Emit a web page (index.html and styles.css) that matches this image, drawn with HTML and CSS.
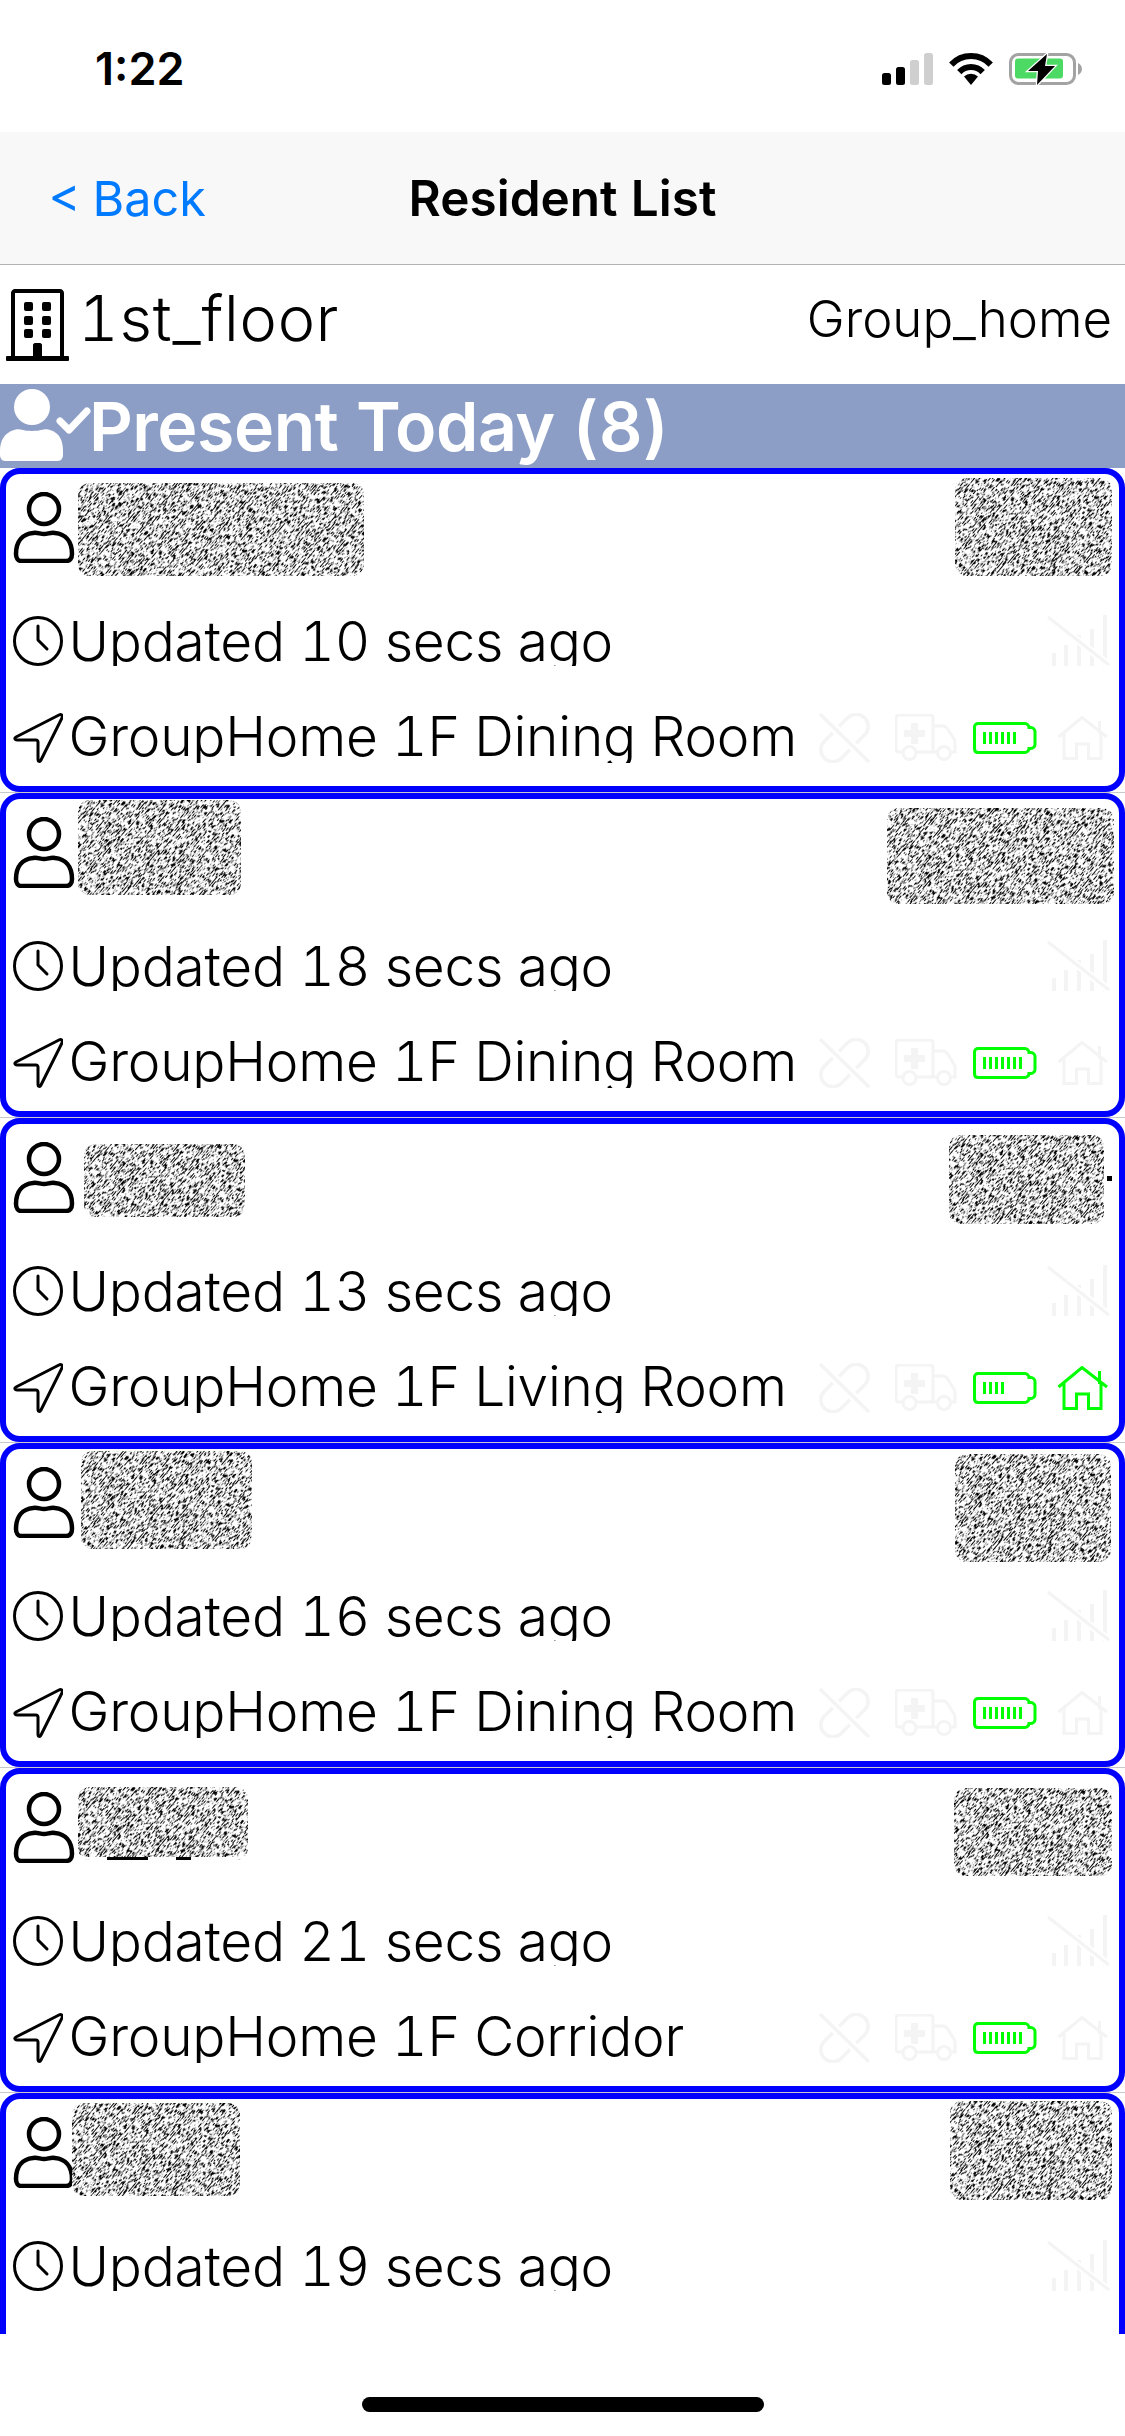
FILE: index.html
```html
<!DOCTYPE html>
<html>
<head>
  <meta charset="utf-8">
  <title>Resident List</title>
  <link rel="stylesheet" href="styles.css">
</head>
<body>

<!-- shared icons and the noise used on the hidden names -->
<svg class="defs" aria-hidden="true">
  <defs>
    <filter id="noise" x="0" y="0" width="100%" height="100%" color-interpolation-filters="sRGB">
      <feTurbulence type="fractalNoise" baseFrequency="0.2 0.95" numOctaves="2" seed="4"/>
      <feColorMatrix values="-7 0 0 0 4.5  -7 0 0 0 4.5  -7 0 0 0 4.5  0 0 0 0 1"/>
      <feGaussianBlur stdDeviation="0.4"/>
    </filter>
    <symbol id="i-person" viewBox="0 0 62 71">
      <circle cx="31" cy="17" r="15" fill="none" stroke="currentColor" stroke-width="4.500"/>
      <path d="M3 62c0-13 7-20 17-21 4-1 7 1 11 1s7-2 11-1c10 1 17 8 17 21 0 4-2 7-6 7H8c-3 0-5-3-5-7z" fill="none" stroke="currentColor" stroke-width="4.500"/>
    </symbol>
    <symbol id="i-clock" viewBox="0 0 50 50">
      <circle cx="25" cy="25" r="23.500" fill="none" stroke="currentColor" stroke-width="3"/>
      <path d="M25 10v14l9 9" fill="none" stroke="currentColor" stroke-width="3" stroke-linecap="round" stroke-linejoin="round"/>
    </symbol>
    <symbol id="i-arrow" viewBox="0 0 50 50">
      <path d="M46 2 3 24c-2 1-1 3 1 3h19c1 0 2 1 2 2v17c0 3 2 3 3 1L49 5c1-3-1-4-3-3z" fill="none" stroke="currentColor" stroke-width="3" stroke-linejoin="round"/>
    </symbol>
    <symbol id="i-signal" viewBox="0 0 63 51">
      <path d="M5 38h4v13H5zM17 30h4v21h-4zM30 20h4v31h-4zM43 14h4v37h-4zM56 0h4v51h-4z" fill="currentColor"/>
      <path d="M1 2 62 50" stroke="#fff" stroke-width="7"/>
      <path d="M1 2 62 50" stroke="currentColor" stroke-width="3"/>
    </symbol>
    <symbol id="i-pill" viewBox="0 0 51 50">
      <rect x="-3" y="13" width="57" height="24" rx="12" transform="rotate(-45 25.5 25)" fill="none" stroke="currentColor" stroke-width="3.500"/>
      <path d="M1 1 50 49" stroke="#fff" stroke-width="9"/>
      <path d="M1 1 50 49" stroke="currentColor" stroke-width="3.500"/>
    </symbol>
    <symbol id="i-amb" viewBox="0 0 63 47">
      <path d="M7 38H4c-2 0-3-1-3-3V4c0-2 1-3 3-3h31c2 0 3 1 3 3v34H22M38 12h10c2 0 3 1 4 2l7 11c1 1 1 2 1 4v9h-3M38 38h4" fill="none" stroke="currentColor" stroke-width="3"/>
      <circle cx="14.500" cy="39" r="6.500" fill="none" stroke="currentColor" stroke-width="3"/>
      <circle cx="49" cy="39" r="6.500" fill="none" stroke="currentColor" stroke-width="3"/>
      <path d="M16 9h7v7h7v7h-7v7h-7v-7H9v-7h7z" fill="currentColor"/>
    </symbol>
    <symbol id="i-home" viewBox="0 0 51 44">
      <path d="M1.500 21 25 1.500 50 21M7 17v25.500h12.500V28h12v14.500H44V17M42.500 5v13" fill="none" stroke="currentColor" stroke-width="3"/>
    </symbol>
    <symbol id="i-batt" viewBox="0 0 64 32">
      <path d="M5 1.500h47c2 0 4 2 4 4h2c2 0 4 2 4 4v13c0 2-2 4-4 4h-2c0 2-2 4-4 4H5c-2 0-3.500-1-3.500-4V5C1.500 3 3 1.500 5 1.500z" fill="none" stroke="currentColor" stroke-width="3"/>
    </symbol>
    <symbol id="i-batt4" viewBox="0 0 64 32">
      <use href="#i-batt" width="64" height="32"/>
      <path d="M10 10h3v12h-3zM16 10h3v12h-3zM22 10h3v12h-3zM28 10h3v12h-3z" fill="currentColor"/>
    </symbol>
    <symbol id="i-batt6" viewBox="0 0 64 32">
      <use href="#i-batt" width="64" height="32"/>
      <path d="M10 10h3v12h-3zM16 10h3v12h-3zM22 10h3v12h-3zM28 10h3v12h-3zM34 10h3v12h-3zM40 10h3v12h-3z" fill="currentColor"/>
    </symbol>
    <symbol id="i-batt7" viewBox="0 0 64 32">
      <use href="#i-batt" width="64" height="32"/>
      <path d="M10 10h3v12h-3zM16 10h3v12h-3zM22 10h3v12h-3zM28 10h3v12h-3zM34 10h3v12h-3zM40 10h3v12h-3zM46 10h3v12h-3z" fill="currentColor"/>
    </symbol>
  </defs>
</svg>

<div class="status">
  <span class="time">1:22</span>
  <div class="status-icons">
    <svg class="st-signal" viewBox="0 0 51 32">
      <rect x="0" y="20" width="9" height="12" rx="2.500" fill="#000"/>
      <rect x="14" y="14" width="9" height="18" rx="2.500" fill="#000"/>
      <rect x="28" y="7" width="9" height="25" rx="2.500" fill="#cfcfcf"/>
      <rect x="42" y="0" width="9" height="32" rx="2.500" fill="#cfcfcf"/>
    </svg>
    <svg class="st-wifi" viewBox="0 0 46 32">
      <path d="M3.300 11.600A27 27 0 0 1 42.700 11.600M11.300 19.100A16 16 0 0 1 34.700 19.100" fill="none" stroke="#000" stroke-width="6"/>
      <path d="M16 23.500A10 10 0 0 1 30 23.500L23 32z" fill="#000"/>
    </svg>
    <svg class="st-batt" viewBox="0 0 73 32">
      <rect x="1.500" y="1.500" width="64" height="29" rx="8" fill="none" stroke="#a3a3a3" stroke-width="3"/>
      <rect x="6" y="5.500" width="48" height="20" rx="3" fill="#4cd964"/>
      <path d="M69 10c2 1 4 3 4 6s-2 5-4 6z" fill="#a3a3a3"/>
      <path d="M38 1 19 18h10l-1 14 18-19H36z" fill="#000" stroke="#fff" stroke-width="2.500" paint-order="stroke"/>
    </svg>
  </div>
</div>

<div class="nav">
  <a class="back">&lt; Back</a>
  <span class="nav-title">Resident List</span>
  <span></span>
</div>

<div class="floor">
  <svg class="building" viewBox="0 0 63 72">
    <path d="M7 70V4c0-1 1-2 2-2h45c1 0 2 1 2 2v66" fill="none" stroke="#000" stroke-width="4"/>
    <rect x="0" y="67" width="63" height="5" rx="1" fill="#000"/>
    <rect x="18" y="13" width="9" height="9" rx="2"/><rect x="36" y="13" width="9" height="9" rx="2"/>
    <rect x="18" y="27" width="9" height="9" rx="2"/><rect x="36" y="27" width="9" height="9" rx="2"/>
    <rect x="18" y="40" width="9" height="9" rx="2"/><rect x="36" y="40" width="9" height="9" rx="2"/>
    <path d="M27 68V56c0-1 1-2 2-2h5c1 0 2 1 2 2v12z"/>
  </svg>
  <span class="floor-name">1st_floor</span>
  <span class="home-name">Group_home</span>
</div>

<div class="section">
  <svg class="section-icon" viewBox="0 0 92 72">
    <circle cx="32" cy="18" r="18" fill="#fff"/>
    <path d="M0 62c0-10 4-18 14-21 5-2 8 1 18 1s13-3 18-1c10 3 13 11 13 21v4c0 3-2 6-5 6H5c-3 0-5-3-5-6z" fill="#fff"/>
    <path d="M60 32 69 41 87 22" fill="none" stroke="#fff" stroke-width="7" stroke-linejoin="round" stroke-linecap="round"/>
  </svg>
  <span class="section-title">Present Today (8)</span>
</div>

<div class="list">

  <div class="item"><div class="card">
    <div class="row-top">
      <svg class="ic-person"><use href="#i-person"/></svg>
      <div class="redact n1"></div>
      <div class="redact s1"></div>
    </div>
    <div class="row">
      <svg class="ic"><use href="#i-clock"/></svg>
      <span class="txt">Updated 10 secs ago</span>
      <svg class="ic-signal"><use href="#i-signal"/></svg>
    </div>
    <div class="row">
      <svg class="ic"><use href="#i-arrow"/></svg>
      <span class="txt loc">GroupHome 1F Dining Room</span>
      <div class="flags">
        <svg class="ic-pill"><use href="#i-pill"/></svg>
        <svg class="ic-amb"><use href="#i-amb"/></svg>
        <svg class="ic-batt"><use href="#i-batt6"/></svg>
        <svg class="ic-home"><use href="#i-home"/></svg>
      </div>
    </div>
  </div></div>

  <div class="item"><div class="card">
    <div class="row-top">
      <svg class="ic-person"><use href="#i-person"/></svg>
      <div class="redact n2"></div>
      <div class="redact s2"></div>
    </div>
    <div class="row">
      <svg class="ic"><use href="#i-clock"/></svg>
      <span class="txt">Updated 18 secs ago</span>
      <svg class="ic-signal"><use href="#i-signal"/></svg>
    </div>
    <div class="row">
      <svg class="ic"><use href="#i-arrow"/></svg>
      <span class="txt loc">GroupHome 1F Dining Room</span>
      <div class="flags">
        <svg class="ic-pill"><use href="#i-pill"/></svg>
        <svg class="ic-amb"><use href="#i-amb"/></svg>
        <svg class="ic-batt"><use href="#i-batt7"/></svg>
        <svg class="ic-home"><use href="#i-home"/></svg>
      </div>
    </div>
  </div></div>

  <div class="item"><div class="card">
    <div class="row-top">
      <svg class="ic-person"><use href="#i-person"/></svg>
      <div class="redact n3"></div>
      <div class="redact s3"></div>
      <span class="speck"></span>
    </div>
    <div class="row">
      <svg class="ic"><use href="#i-clock"/></svg>
      <span class="txt">Updated 13 secs ago</span>
      <svg class="ic-signal"><use href="#i-signal"/></svg>
    </div>
    <div class="row">
      <svg class="ic"><use href="#i-arrow"/></svg>
      <span class="txt loc">GroupHome 1F Living Room</span>
      <div class="flags">
        <svg class="ic-pill"><use href="#i-pill"/></svg>
        <svg class="ic-amb"><use href="#i-amb"/></svg>
        <svg class="ic-batt"><use href="#i-batt4"/></svg>
        <svg class="ic-home on"><use href="#i-home"/></svg>
      </div>
    </div>
  </div></div>

  <div class="item"><div class="card">
    <div class="row-top">
      <svg class="ic-person"><use href="#i-person"/></svg>
      <div class="redact n4"></div>
      <div class="redact s4"></div>
    </div>
    <div class="row">
      <svg class="ic"><use href="#i-clock"/></svg>
      <span class="txt">Updated 16 secs ago</span>
      <svg class="ic-signal"><use href="#i-signal"/></svg>
    </div>
    <div class="row">
      <svg class="ic"><use href="#i-arrow"/></svg>
      <span class="txt loc">GroupHome 1F Dining Room</span>
      <div class="flags">
        <svg class="ic-pill"><use href="#i-pill"/></svg>
        <svg class="ic-amb"><use href="#i-amb"/></svg>
        <svg class="ic-batt"><use href="#i-batt7"/></svg>
        <svg class="ic-home"><use href="#i-home"/></svg>
      </div>
    </div>
  </div></div>

  <div class="item"><div class="card">
    <div class="row-top">
      <svg class="ic-person"><use href="#i-person"/></svg>
      <div class="redact n5"></div>
      <div class="redact s5"></div>
    </div>
    <div class="row">
      <svg class="ic"><use href="#i-clock"/></svg>
      <span class="txt">Updated 21 secs ago</span>
      <svg class="ic-signal"><use href="#i-signal"/></svg>
    </div>
    <div class="row">
      <svg class="ic"><use href="#i-arrow"/></svg>
      <span class="txt loc">GroupHome 1F Corridor</span>
      <div class="flags">
        <svg class="ic-pill"><use href="#i-pill"/></svg>
        <svg class="ic-amb"><use href="#i-amb"/></svg>
        <svg class="ic-batt"><use href="#i-batt7"/></svg>
        <svg class="ic-home"><use href="#i-home"/></svg>
      </div>
    </div>
  </div></div>

  <div class="item"><div class="card">
    <div class="row-top">
      <svg class="ic-person"><use href="#i-person"/></svg>
      <div class="redact n6"></div>
      <div class="redact s6"></div>
    </div>
    <div class="row">
      <svg class="ic"><use href="#i-clock"/></svg>
      <span class="txt">Updated 19 secs ago</span>
      <svg class="ic-signal"><use href="#i-signal"/></svg>
    </div>
  </div></div>

</div>

<div class="bottom"><div class="home-bar"></div></div>

</body>
</html>
```

FILE: styles.css
```css
html, body {
  margin: 0;
  padding: 0;
  background: #fff;
}

body {
  width: 1125px;
  height: 2436px;
  overflow: hidden;
  font-family: Inter, "Liberation Sans", sans-serif;
  font-variant-numeric: tabular-nums;
  color: #000;
}

.defs {
  position: absolute;
  width: 0;
  height: 0;
}

/* status bar */
.status {
  height: 132px;
  box-sizing: border-box;
  display: flex;
  align-items: flex-start;
  justify-content: space-between;
  padding: 53px 43px 0 95px;
}

.time {
  font-size: 45px;
  line-height: 32px;
  font-weight: 600;
  font-variant-numeric: normal;
}

.status-icons {
  display: flex;
}

.st-signal { width: 51px; height: 32px; margin-right: 15px; }
.st-wifi { width: 46px; height: 32px; margin-right: 15px; }
.st-batt { width: 73px; height: 32px; }

/* nav bar */
.nav {
  height: 133px;
  box-sizing: border-box;
  background: #f8f8f8;
  border-bottom: 1px solid #b2b2b2;
  display: grid;
  grid-template-columns: 1fr auto 1fr;
  align-items: center;
  font-size: 48.5px;
}

.back {
  color: #007aff;
  padding-left: 48px;
}

.nav-title {
  font-size: 49.5px;
  font-weight: 600;
}

/* floor line */
.floor {
  height: 119px;
  display: flex;
  align-items: center;
  padding: 0 13px 0 6px;
}

.building {
  width: 63px;
  height: 72px;
  margin-right: 9px;
}

.floor-name {
  font-size: 63px;
  font-weight: 300;
  letter-spacing: 0.8px;
  margin-bottom: 14px;
}

.home-name {
  font-size: 51px;
  font-weight: 300;
  margin-left: auto;
  margin-bottom: 12px;
}

/* section header */
.section {
  height: 84px;
  background: #8c9ec5;
  color: #fff;
  display: flex;
  align-items: center;
}

.section-icon {
  width: 92px;
  height: 72px;
  margin-top: -2px;
  margin-right: -3px;
  flex: none;
}

.section-title {
  font-size: 68px;
  font-weight: 600;
  letter-spacing: -0.5px;
}

/* resident cards */
.list {
  height: 1866px;
  overflow: hidden;
}

.item {
  height: 325px;
  box-sizing: border-box;
  border-bottom: 1px solid #c8c7cc;
}

.card {
  height: 324px;
  box-sizing: border-box;
  border: 6px solid #00f;
  border-radius: 20px;
  padding-left: 6.5px;
  background: #fff;
}

.row-top {
  height: 118px;
  display: flex;
  align-items: flex-start;
}

.row {
  height: 97px;
  display: flex;
  align-items: center;
  padding-right: 9px;
}

.ic-person {
  width: 62px;
  height: 71px;
  margin-top: 18px;
  flex: none;
}

.ic {
  width: 50px;
  height: 50px;
  flex: none;
}

/* the app cuts the descenders of these lines, keep that */
.txt {
  font-size: 55px;
  font-weight: 300;
  letter-spacing: -0.22px;
  line-height: 60px;
  height: 55px;
  margin: 5px 0 10px 6px;
  overflow: hidden;
  white-space: nowrap;
}

.loc {
  height: 57px;
  margin: 3px 0 10px 6px;
}

.ic-signal {
  width: 63px;
  height: 51px;
  margin-left: auto;
  color: #f4f4f4;
}

.flags {
  margin-left: auto;
  display: flex;
  align-items: center;
  color: #f4f4f4;
}

.ic-pill { width: 51px; height: 50px; margin-right: 25px; }
.ic-amb { width: 63px; height: 47px; margin-right: 15px; }
.ic-batt { width: 64px; height: 32px; margin-right: 20px; color: #0f0; }
.ic-home { width: 51px; height: 44px; margin-right: 2px; }
.ic-home.on { color: #0f0; }

/* hidden names: noise drawn by the #noise filter */
.redact {
  position: relative;
  overflow: hidden;
  border-radius: 12px;
  flex: none;
}

.redact::before {
  content: "";
  position: absolute;
  left: -120px;
  right: -120px;
  top: -120px;
  bottom: -120px;
  background: #fff;
  filter: url(#noise);
  transform: rotate(-50deg);
}

.s1, .s2, .s3, .s4, .s5, .s6 {
  margin-left: auto;
}

.n1 { width: 286px; height: 93px; margin: 9px 0 0 3px; }
.s1 { width: 157px; height: 98px; margin-top: 4px; margin-right: 7px; }
.n2 { width: 163px; height: 95px; margin: 1px 0 0 3px; }
.s2 { width: 227px; height: 96px; margin-top: 9px; margin-right: 5px; }
.n3 { width: 161px; height: 73px; margin: 20px 0 0 9px; }
.s3 { width: 155px; height: 89px; margin-top: 11px; margin-right: 3px; }
.n4 { width: 171px; height: 98px; margin: 2px 0 0 6px; }
.s4 { width: 156px; height: 108px; margin-top: 5px; margin-right: 8px; }
.n5 { width: 170px; height: 73px; margin: 13px 0 0 3px; }
.s5 { width: 158px; height: 88px; margin-top: 14px; margin-right: 7px; }
.n6 { width: 168px; height: 93px; margin: 4px 0 0 -3px; }
.s6 { width: 162px; height: 99px; margin-top: 2px; margin-right: 7px; }

/* bits of underscore that stick out under one name */
.n5::after {
  content: "";
  position: absolute;
  left: 0;
  right: 0;
  bottom: 0;
  height: 3px;
  background: linear-gradient(to right, #fff 29px, #000 29px, #000 70px, #fff 70px, #fff 98px, #000 98px, #000 113px, #fff 113px);
}

.speck {
  width: 5px;
  height: 5px;
  margin: 52px 7px 0 0;
  background: #000;
  flex: none;
}

/* home indicator */
.bottom {
  height: 102px;
  display: flex;
  justify-content: center;
  padding-top: 63px;
  box-sizing: border-box;
}

.home-bar {
  width: 402px;
  height: 15px;
  border-radius: 8px;
  background: #000;
}
```
